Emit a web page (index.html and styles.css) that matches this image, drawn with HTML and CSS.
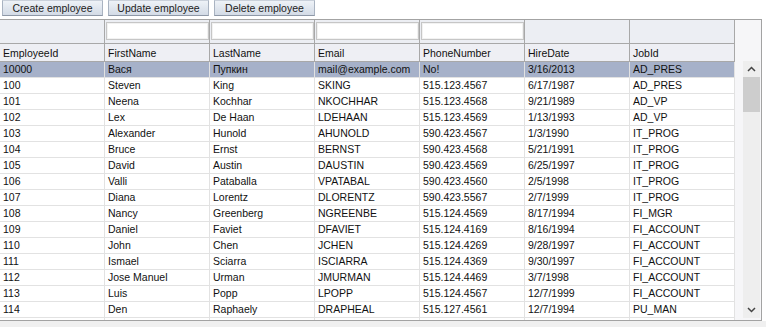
FILE: index.html
```html
<!DOCTYPE html>
<html lang="en">
<head>
    <meta charset="UTF-8">
    <title>Employees</title>
    <link rel="stylesheet" href="styles.css">
</head>
<body>
    <div class="toolbar">
        <button class="tool-btn">Create employee</button>
        <button class="tool-btn">Update employee</button>
        <button class="tool-btn">Delete employee</button>
    </div>

    <div class="grid-frame">
        <div class="grid-main">
            <table class="grid">
                <colgroup>
                    <col><col><col><col><col><col><col>
                </colgroup>
                <thead>
                    <tr class="filter-row">
                        <th></th>
                        <th><input type="text"></th>
                        <th><input type="text"></th>
                        <th><input type="text"></th>
                        <th><input type="text"></th>
                        <th></th>
                        <th></th>
                    </tr>
                    <tr class="header-row">
                        <th>EmployeeId</th>
                        <th>FirstName</th>
                        <th>LastName</th>
                        <th>Email</th>
                        <th>PhoneNumber</th>
                        <th>HireDate</th>
                        <th>JobId</th>
                    </tr>
                </thead>
                <tbody>
                    <tr class="selected"><td>10000</td><td>Вася</td><td>Пупкин</td><td>mail@example.com</td><td>No!</td><td>3/16/2013</td><td>AD_PRES</td></tr>
                    <tr><td>100</td><td>Steven</td><td>King</td><td>SKING</td><td>515.123.4567</td><td>6/17/1987</td><td>AD_PRES</td></tr>
                    <tr><td>101</td><td>Neena</td><td>Kochhar</td><td>NKOCHHAR</td><td>515.123.4568</td><td>9/21/1989</td><td>AD_VP</td></tr>
                    <tr><td>102</td><td>Lex</td><td>De Haan</td><td>LDEHAAN</td><td>515.123.4569</td><td>1/13/1993</td><td>AD_VP</td></tr>
                    <tr><td>103</td><td>Alexander</td><td>Hunold</td><td>AHUNOLD</td><td>590.423.4567</td><td>1/3/1990</td><td>IT_PROG</td></tr>
                    <tr><td>104</td><td>Bruce</td><td>Ernst</td><td>BERNST</td><td>590.423.4568</td><td>5/21/1991</td><td>IT_PROG</td></tr>
                    <tr><td>105</td><td>David</td><td>Austin</td><td>DAUSTIN</td><td>590.423.4569</td><td>6/25/1997</td><td>IT_PROG</td></tr>
                    <tr><td>106</td><td>Valli</td><td>Pataballa</td><td>VPATABAL</td><td>590.423.4560</td><td>2/5/1998</td><td>IT_PROG</td></tr>
                    <tr><td>107</td><td>Diana</td><td>Lorentz</td><td>DLORENTZ</td><td>590.423.5567</td><td>2/7/1999</td><td>IT_PROG</td></tr>
                    <tr><td>108</td><td>Nancy</td><td>Greenberg</td><td>NGREENBE</td><td>515.124.4569</td><td>8/17/1994</td><td>FI_MGR</td></tr>
                    <tr><td>109</td><td>Daniel</td><td>Faviet</td><td>DFAVIET</td><td>515.124.4169</td><td>8/16/1994</td><td>FI_ACCOUNT</td></tr>
                    <tr><td>110</td><td>John</td><td>Chen</td><td>JCHEN</td><td>515.124.4269</td><td>9/28/1997</td><td>FI_ACCOUNT</td></tr>
                    <tr><td>111</td><td>Ismael</td><td>Sciarra</td><td>ISCIARRA</td><td>515.124.4369</td><td>9/30/1997</td><td>FI_ACCOUNT</td></tr>
                    <tr><td>112</td><td>Jose Manuel</td><td>Urman</td><td>JMURMAN</td><td>515.124.4469</td><td>3/7/1998</td><td>FI_ACCOUNT</td></tr>
                    <tr><td>113</td><td>Luis</td><td>Popp</td><td>LPOPP</td><td>515.124.4567</td><td>12/7/1999</td><td>FI_ACCOUNT</td></tr>
                    <tr><td>114</td><td>Den</td><td>Raphaely</td><td>DRAPHEAL</td><td>515.127.4561</td><td>12/7/1994</td><td>PU_MAN</td></tr>
                    <tr class="partial"><td></td><td></td><td></td><td></td><td></td><td></td><td></td></tr>
                </tbody>
            </table>
        </div>
        <div class="grid-side">
            <div class="scrollbar">
                <div class="scroll-arrow">
                    <svg width="9" height="6" viewBox="0 0 9 6"><path d="M1 5 L4.5 1.5 L8 5" fill="none" stroke="#444" stroke-width="1.5"/></svg>
                </div>
                <div class="scroll-thumb"></div>
                <div class="scroll-track"></div>
                <div class="scroll-arrow">
                    <svg width="9" height="6" viewBox="0 0 9 6"><path d="M1 1 L4.5 4.5 L8 1" fill="none" stroke="#444" stroke-width="1.5"/></svg>
                </div>
            </div>
        </div>
    </div>
    <div class="footer"></div>
</body>
</html>
```

FILE: styles.css
```css
html, body {
    margin: 0;
    padding: 0;
    background-color: white;
    font-family: "Liberation Sans", Arial, sans-serif;
    font-size: 10.5px;
    color: #111;
}
.toolbar {
    display: flex;
    gap: 5px;
    padding-left: 2px;
    height: 19px;
}
.tool-btn {
    width: 101px;
    height: 16px;
    padding: 0;
    font-family: inherit;
    font-size: 10.5px;
    color: #222;
    background: linear-gradient(#eef2f7, #d3dbe6);
    border: 1px solid #a9b3c1;
    border-top-color: #c9d0da;
    border-bottom-color: #8e98a7;
}
.grid-frame {
    display: flex;
    width: 761px;
    height: 300px;
    border: 1px solid #a3a3a3;
    border-left: none;
    background-color: #f6f6f8;
    overflow: hidden;
}
.grid-main {
    width: 735px;
    flex: none;
    background-color: white;
    overflow: hidden;
}
.grid {
    width: 735px;
    table-layout: fixed;
    border-collapse: separate;
    border-spacing: 0;
}
.grid col {
    width: 105px;
}
.grid th, .grid td {
    box-sizing: border-box;
    padding: 0 0 0 3px;
    text-align: left;
    font-weight: normal;
    white-space: nowrap;
    overflow: hidden;
}
.filter-row th {
    height: 23px;
    padding: 2px 1px 3px 1px;
    background-color: #eceef3;
    border-right: 1px solid #a8a8a8;
    border-bottom: 1px solid #a8a8a8;
}
.filter-row input {
    display: block;
    box-sizing: border-box;
    width: 103px;
    height: 18px;
    margin: 0;
    padding: 0;
    border: 1px solid #c6c6c6;
    box-shadow: inset 0 0 0 1px #f2f2f2;
    background-color: white;
}
.header-row th {
    height: 18px;
    line-height: 16px;
    background-color: #eeeff4;
    border-right: 1px solid #a8a8a8;
    border-bottom: 1px solid #a8a8a8;
}
.grid td {
    height: 16px;
    line-height: 15px;
    border-right: 1px solid #e2e2e2;
    border-bottom: 1px solid #e2e2e2;
}
.grid tr.selected td {
    background-color: #a6b1c9;
}
.grid-side {
    flex: 1;
    padding: 41px 1px 0 8px;
}
.scrollbar {
    display: flex;
    flex-direction: column;
    height: 257px;
    background-color: #eeeeee;
}
.scroll-arrow {
    height: 16px;
    display: flex;
    align-items: center;
    justify-content: center;
}
.scroll-thumb {
    height: 35px;
    background-color: #cdcdcd;
}
.scroll-track {
    flex: 1;
}
.footer {
    height: 7px;
    background-color: #f0f0f0;
}
```
